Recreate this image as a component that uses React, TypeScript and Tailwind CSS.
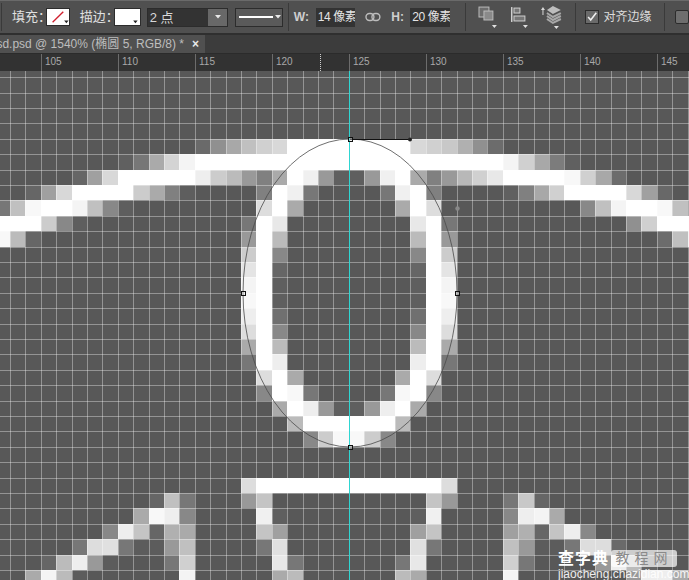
const FONT = "font-['Liberation_Sans','Noto_Sans_CJK_SC',sans-serif]"

// canvas is 15.4px per document pixel, col 0 starts at x=-5.4, row 0 at y=123.3
const PITCH = 15.4
const cellX = (c: number) => Math.round(-5.4 + c * PITCH)
const cellY = (r: number) => Math.round(123.3 + r * PITCH)

const rep = (v: string, n: number) => Array(n).fill(v).join(' ')

// [row, first col, grey values]
const PIXELS: [number, number, string][] = [
  [1, 13, `6a 90 a8 c0 d0 d8 ${rep('ff', 8)} d8 d0 c8 b0 90 6c`],
  [2, 8, `60 77 aa d4 f4 ${rep('ff', 20)} f4 d0 a8 7c 60`],
  [3, 5, `66 a0 d8 ff ff ff ff ff ee cc bb 99 80 aa ff f0 99 5f 5f 99 f0 ff aa 80 99 b8 d0 e8 ff ff ff ff f8 d0 a8 6c`],
  [4, 2, `66 a0 d8 ff ff ff ff cc aa 80 5e`],
  [4, 17, `80 ff f0 77`],
  [4, 25, `77 f0 ff 80`],
  [4, 33, `60 80 a8 d0 ff ff ff ff d8 a0 68`],
  [5, 0, `77 c0 f8 ff ff f4 c0 88 5e`],
  [5, 17, `dd ff aa`],
  [5, 26, `aa ff dd`],
  [5, 38, `88 c0 f4 ff ff f8 c0 80`],
  [6, 0, `ff ff ff cc 88 5e`],
  [6, 16, `77 ff e8`],
  [6, 27, `e8 ff 77`],
  [6, 41, `90 d0 ff ff ff`],
  [7, 0, `f8 bb 66`],
  [7, 16, `99 ff bb`],
  [7, 27, `bb ff 99`],
  [7, 43, `6c c0 f0`],
  [8, 16, `cc ff 88`],
  [8, 27, `88 ff cc`],
  [9, 16, `e4 ff 66`],
  [9, 27, `66 ff e4`],
  [10, 16, `f4 ff 5f`],
  [10, 27, `5f ff f4`],
  [11, 16, `f8 ff 5f`],
  [11, 27, `5f ff f8`],
  [12, 16, `ee ff 70`],
  [12, 27, `70 ff ee`],
  [13, 16, `dd ff 88`],
  [13, 27, `88 ff dd`],
  [14, 16, `aa ff bb`],
  [14, 27, `bb ff aa`],
  [15, 16, `77 ff ee`],
  [15, 27, `ee ff 77`],
  [16, 17, `dd ff aa`],
  [16, 26, `aa ff dd`],
  [17, 17, `88 ff f8 77`],
  [17, 25, `77 f8 ff 88`],
  [18, 18, `aa ff ee 99 5f 5f 99 ee ff aa`],
  [19, 19, `bb ff ff ff ff ff ff bb`],
  [20, 20, `88 cc f8 f8 cc 88`],
  [23, 16, `dd ${rep('ff', 12)} dd`],
  [24, 10, `66 c0 77`],
  [24, 16, `99 c4`],
  [24, 28, `c4 99`],
  [24, 33, `77 c8 66`],
  [25, 9, `aa f8 ee 88`],
  [25, 17, `f0 5f`],
  [25, 27, `5f f0`],
  [25, 33, `88 ee f4 aa`],
  [26, 7, `88 ee c4 66 b0 aa`],
  [26, 17, `c4 a0`],
  [26, 27, `a0 c4`],
  [26, 33, `a0 b0 66 c4 ee 88`],
  [27, 5, `77 dd e0 77 5c 5c 99 c0`],
  [27, 17, `77 e0`],
  [27, 27, `e0 77`],
  [27, 33, `c0 99 5c 5c 77 dd dd 6a`],
  [28, 3, `66 bb ee 99 5c`],
  [28, 11, `77 d0`],
  [28, 18, `e8 77`],
  [28, 26, `77 e8`],
  [28, 33, `d0 77`],
  [28, 39, `99 ee bb 66`],
  [29, 2, `aa f4 bb 5c`],
  [29, 12, `f4`],
  [29, 18, `aa bb`],
  [29, 26, `bb aa`],
  [29, 33, `f4`],
  [29, 41, `99 ee ee aa`],
]

function PixelCanvas() {
  const cols = Array.from({ length: 46 }, (_, i) => i)
  const rows = Array.from({ length: 35 }, (_, i) => i - 4)
  return (
    <svg viewBox="0 71 689 509" className="block w-[689px] h-[509px] shrink-0" shapeRendering="crispEdges">
      <rect x="0" y="71" width="689" height="509" fill="#585858" />
      {PIXELS.map(([r, start, greys]) =>
        greys.split(' ').map((g, i) => (
          <rect
            key={`${r}-${start}-${i}`}
            x={cellX(start + i)}
            y={cellY(r)}
            width={cellX(start + i + 1) - cellX(start + i)}
            height={cellY(r + 1) - cellY(r)}
            fill={`#${g}${g}${g}`}
          />
        ))
      )}
      {cols.map(c => (
        <rect key={`v${c}`} x={cellX(c)} y="71" width="1" height="509" fill="#fff" fillOpacity={0.36} />
      ))}
      {rows.map(r => (
        <rect key={`h${r}`} x="0" y={cellY(r)} width="689" height="1" fill="#fff" fillOpacity={0.36} />
      ))}
      <g shapeRendering="auto">
        <ellipse cx="350" cy="293" rx="107" ry="154" fill="none" stroke="#4a4a4a" strokeWidth="0.8" />
        <line x1="350" y1="139.5" x2="410" y2="139.5" stroke="#111" strokeWidth="1" />
        <circle cx="410" cy="139.5" r="2" fill="#222" />
        <circle cx="457.5" cy="208.5" r="2.2" fill="#8a8a8a" />
      </g>
      <rect x="349" y="71" width="1" height="509" fill="#2fd6d2" />
      {[[350, 139], [243, 293], [457, 293], [350, 447]].map(([x, y]) => (
        <rect key={`${x}-${y}`} x={x - 2} y={y - 2} width="4" height="4" fill="#ddd" fillOpacity={0.4} stroke="#111" strokeWidth="1" />
      ))}
    </svg>
  )
}

function SmallArrow({ color = '#1c1c1c' }: { color?: string }) {
  return (
    <svg width="6" height="4" viewBox="0 0 6 4" className="block">
      <path d="M0 0h6L3 3.5z" fill={color} />
    </svg>
  )
}

function Toolbar() {
  return (
    <div className="relative flex items-center h-[35px] shrink-0 bg-[#505050] border-t border-[#6a6a6a] border-b-2 border-b-[#2f2f2f] text-[13px] text-[#e0e0e0]">
      <div className="w-px h-[28px] ml-[1px] bg-[#3a3a3a]" />
      <span className="ml-[10px] w-[34px] whitespace-nowrap">填充：</span>
      <div className="relative w-[24px] h-[18px] bg-white border border-[#2c2c2c] overflow-hidden">
        <svg viewBox="0 0 24 18" className="block w-full h-full">
          <line x1="6" y1="15" x2="18" y2="3" stroke="#d0202f" strokeWidth="1.5" />
          <path d="M19 13h5l-2.5 3z" fill="#222" />
        </svg>
      </div>
      <span className="ml-[10px] w-[34px] whitespace-nowrap">描边：</span>
      <div className="w-[27px] h-[18px] bg-white border border-[#2c2c2c]">
        <svg viewBox="0 0 27 18" className="block w-full h-full">
          <path d="M20 13h5l-2.5 3z" fill="#222" />
        </svg>
      </div>
      <div className="ml-[6px] flex w-[82px] h-[19px] bg-[#333333] border border-[#2c2c2c]">
        <span className="flex-1 pl-[2px] leading-[17px] text-[#d8d8d8]">2 点</span>
        <div className="w-[19px] flex items-center justify-center bg-[#686868]">
          <SmallArrow color="#e8e8e8" />
        </div>
      </div>
      <div className="ml-[7px] flex items-center w-[48px] h-[19px] bg-[#5a5a5a] border border-[#2c2c2c] pl-[3px] gap-[2px]">
        <div className="w-[34px] h-[2px] bg-white" />
        <SmallArrow color="#e8e8e8" />
      </div>
      <div className="ml-[5px] w-px h-[28px] bg-[#3a3a3a]" />
      <span className="ml-[5px] w-[22px] text-[12px] font-bold text-[#cfcfcf]">W:</span>
      <div className="w-[40px] h-[19px] bg-[#333333] pl-[2px] text-[12px] tracking-[-0.4px] leading-[19px] overflow-hidden whitespace-nowrap text-[#e4e4e4]">14 像素</div>
      <svg width="16" height="10" viewBox="0 0 16 10" fill="none" stroke="#bdbdbd" strokeWidth="1.4" className="ml-[10px]">
        <rect x="1" y="1.500" width="8" height="7" rx="3.500" />
        <rect x="7" y="1.500" width="8" height="7" rx="3.500" />
      </svg>
      <span className="ml-[10px] w-[19px] text-[12px] font-bold text-[#cfcfcf]">H:</span>
      <div className="w-[40px] h-[19px] bg-[#333333] pl-[2px] text-[12px] tracking-[-0.4px] leading-[19px] overflow-hidden whitespace-nowrap text-[#e4e4e4]">20 像素</div>
      <div className="ml-[15px] w-px h-[28px] bg-[#3a3a3a]" />
      <svg width="20" height="24" viewBox="0 0 20 24" className="ml-[12px]">
        <rect x="1" y="2" width="10" height="10" fill="#6d6d6d" stroke="#bcbcbc" />
        <rect x="6" y="6" width="9" height="9" fill="#8a8a8a" stroke="#bcbcbc" />
        <path d="M14 20h5l-2.5 3z" fill="#e0e0e0" />
      </svg>
      <svg width="20" height="24" viewBox="0 0 20 24" className="ml-[12px]">
        <rect x="1" y="2" width="1.500" height="15" fill="#d0d0d0" />
        <rect x="4" y="3" width="6" height="5" fill="#777" stroke="#cfcfcf" />
        <rect x="4" y="11" width="11" height="5" fill="#777" stroke="#cfcfcf" />
        <path d="M13 20h5l-2.500 3z" fill="#e0e0e0" />
      </svg>
      <svg width="24" height="26" viewBox="0 0 24 26" className="ml-[8px]">
        <path d="M3 6l2-3 2 3zM4.500 6v5h1V6z" fill="#d8d8d8" />
        <path d="M15 2l8 4-8 4-6-4z" fill="#bdbdbd" />
        <path d="M9 9l6 4 8-4M9 12l6 4 8-4M9 15l6 4 8-4" fill="none" stroke="#a8a8a8" strokeWidth="2" />
        <path d="M16 22h5l-2.500 3z" fill="#e0e0e0" />
      </svg>
      <div className="ml-[13px] w-px h-[28px] bg-[#3a3a3a]" />
      <div className="ml-[9px] w-[14px] h-[14px] bg-[#6a6a6a] border border-[#2c2c2c] flex items-center justify-center">
        <svg width="14" height="14" viewBox="0 0 14 14" fill="none" stroke="#f0f0f0" strokeWidth="1.8">
          <path d="M2.500 7l3 3.500L12 2" />
        </svg>
      </div>
      <span className="ml-[5px] w-[61px] whitespace-nowrap text-[12px] text-[#dcdcdc]">对齐边缘</span>
      <div className="w-px h-[28px] bg-[#3a3a3a]" />
      <div className="ml-[10px] w-[14px] h-[14px] rounded-[2px] bg-[#6e6e6e] border border-[#2c2c2c]" />
    </div>
  )
}

function TabBar() {
  return (
    <div className="flex h-[19px] shrink-0 bg-[#3c3c3c] border-b border-[#2b2b2b]">
      <div className="flex items-center justify-end w-[205px] overflow-hidden bg-[#505050] whitespace-nowrap text-[12px] text-[#bdbdbd]">
        <span>sd.psd @ 1540% (椭圆 5, RGB/8) *</span>
        <span className="ml-[8px] mr-[6px] text-[12px] font-bold leading-none text-[#e8e8e8]">×</span>
      </div>
    </div>
  )
}

function Ruler() {
  const labels = [105, 110, 115, 120, 125, 130, 135, 140, 145]
  return (
    <div className="relative flex h-[17px] shrink-0 pl-[41px] bg-[#323232] text-[10px] leading-[14px] text-[#a8a8a8]">
      {labels.map(n => (
        <div key={n} className="w-[77px] shrink-0 border-l border-[#6c6c6c] pl-[3px] pt-[1px]">{n}</div>
      ))}
      <div className="absolute left-[320px] top-0 h-full border-l border-dotted border-[#cfcfcf]" />
    </div>
  )
}

function Watermark() {
  return (
    <div className="absolute left-[558px] top-[549px] w-[122px] text-white">
      <div className="flex items-center h-[19px]">
        <span className="w-[52px] text-[16px] font-bold leading-none tracking-[1px] whitespace-nowrap">查字典</span>
        <span className="ml-[1px] w-[66px] h-[17px] rounded-[3px] bg-white/70 text-center text-[14px] leading-[17px] tracking-[5px] text-[#8a8a8a] whitespace-nowrap">教程网</span>
      </div>
      <div className="text-[12px] leading-[12px] whitespace-nowrap text-white/90">jiaocheng.chazidian.com</div>
    </div>
  )
}

export default function App() {
  return (
    <div className={`relative flex flex-col w-[689px] h-[580px] overflow-hidden bg-[#585858] ${FONT}`}>
      <Toolbar />
      <TabBar />
      <Ruler />
      <PixelCanvas />
      <Watermark />
    </div>
  )
}
